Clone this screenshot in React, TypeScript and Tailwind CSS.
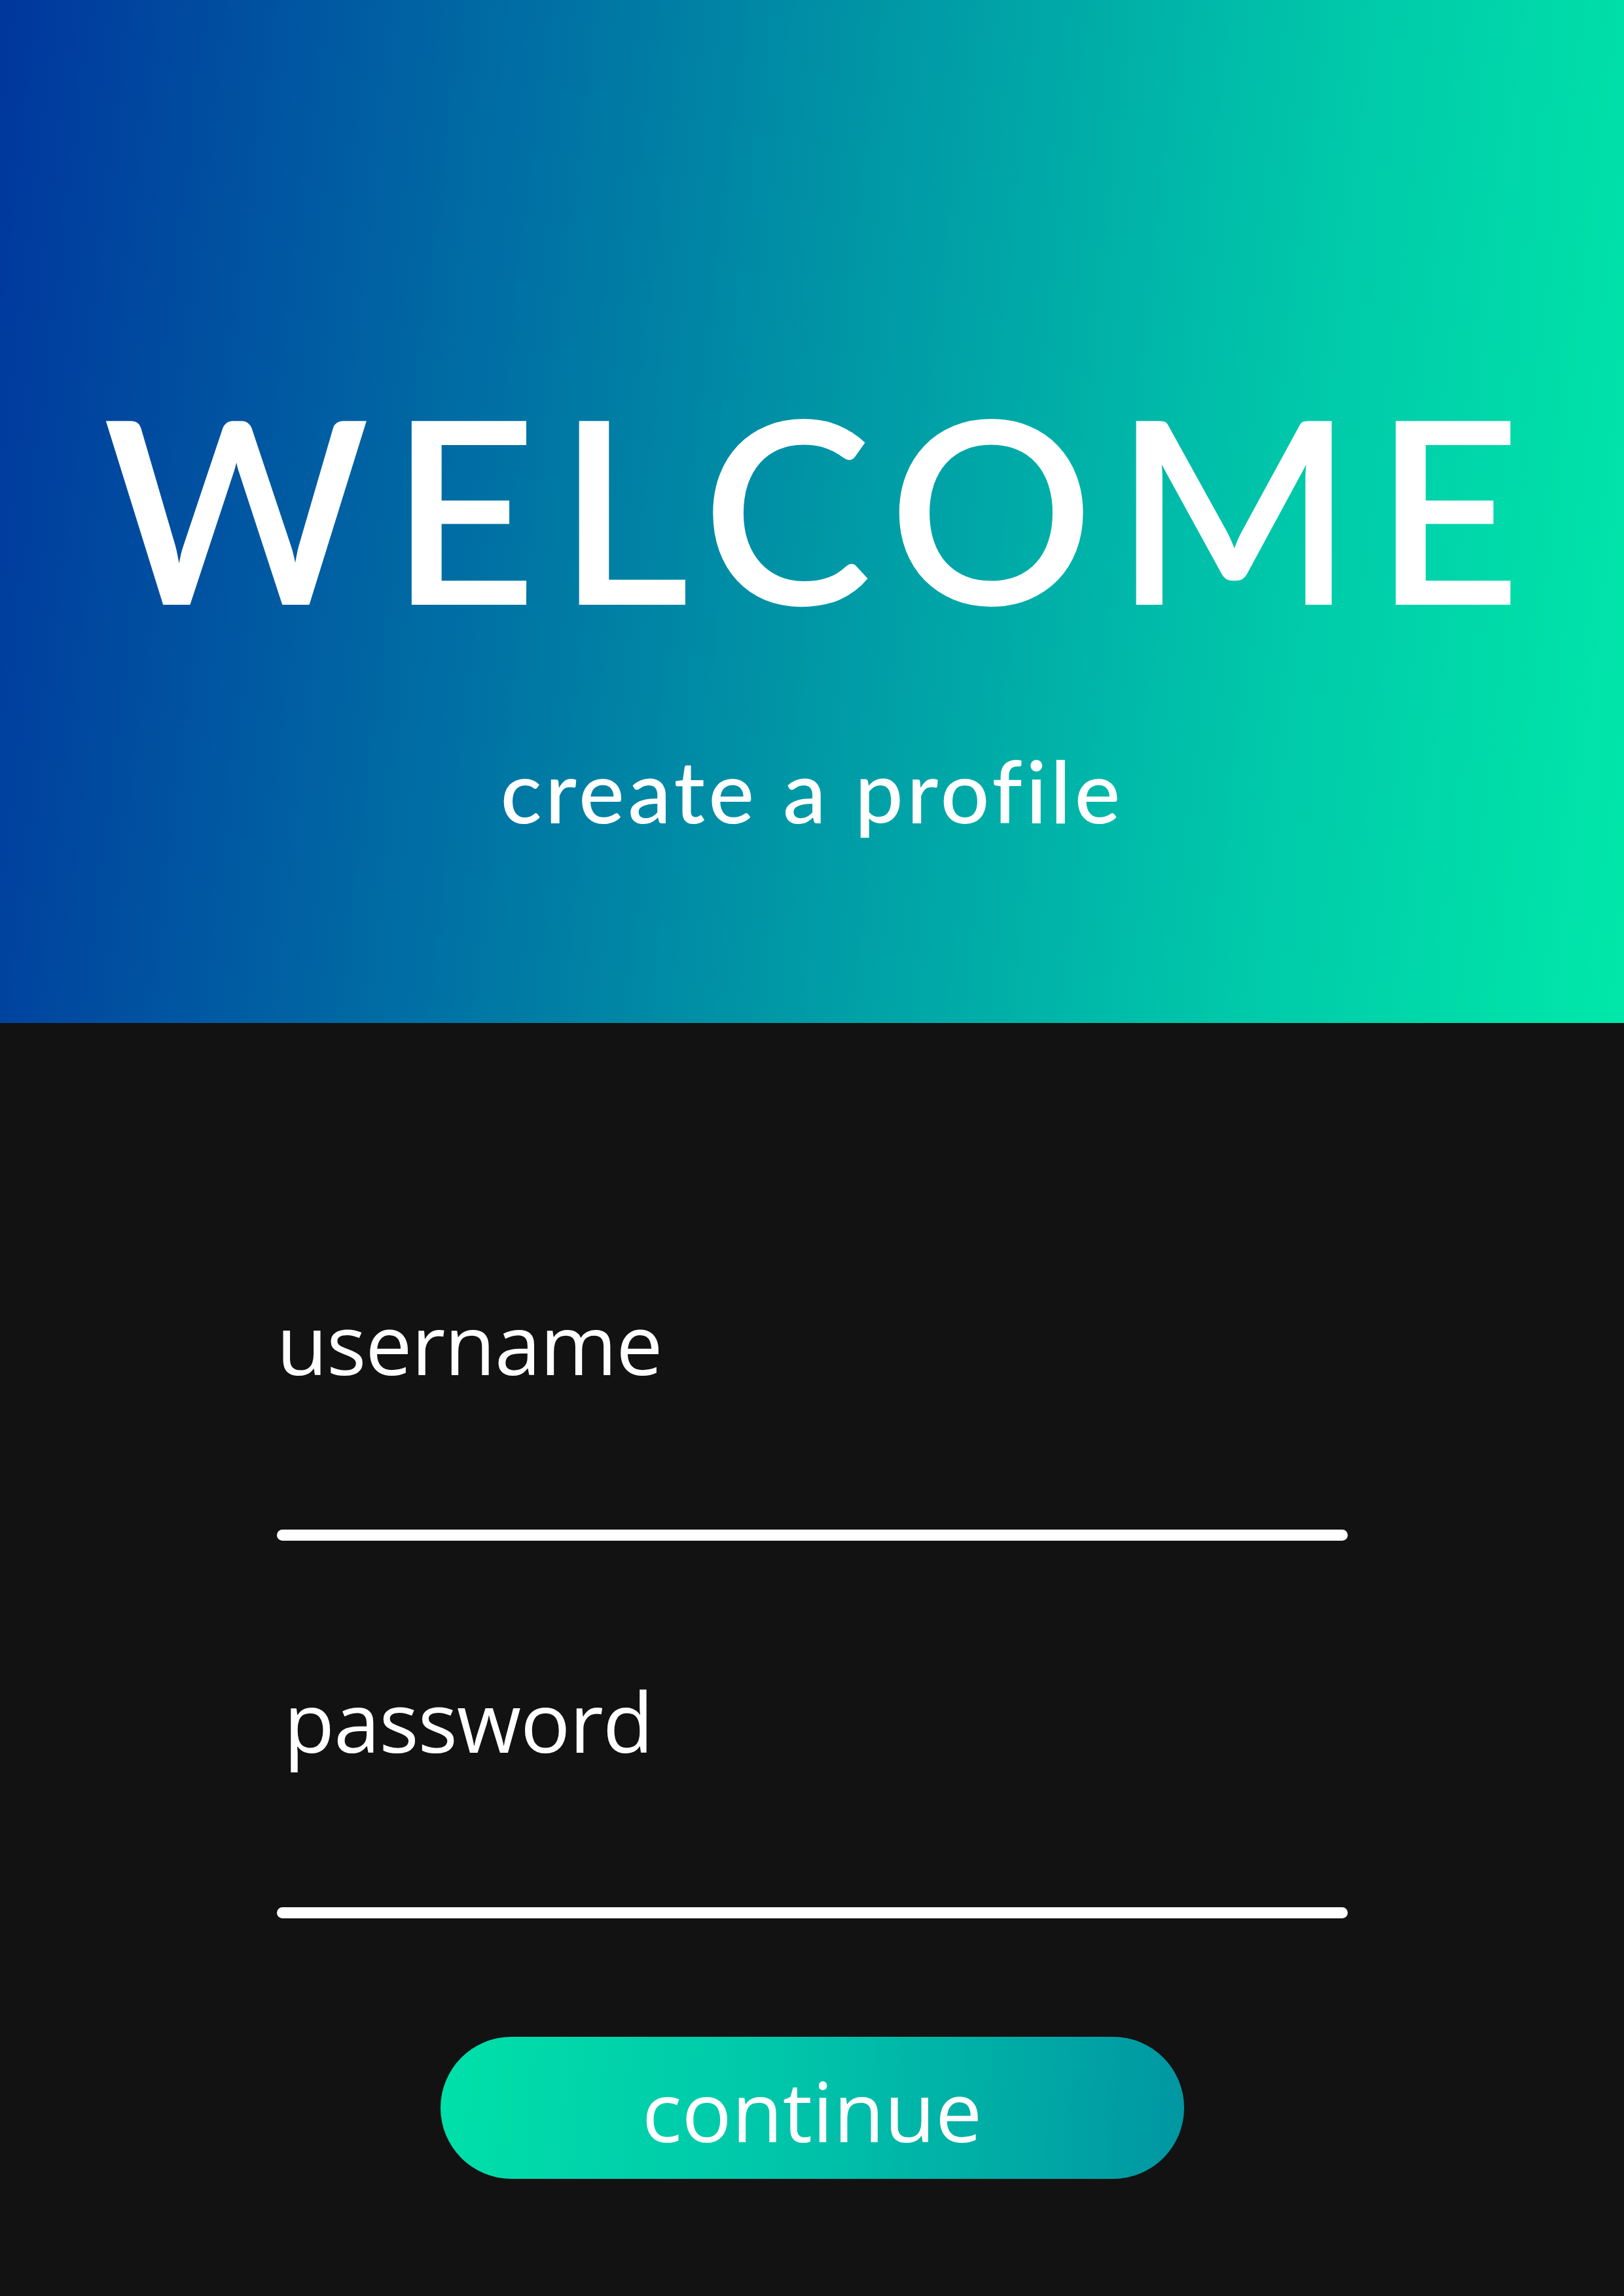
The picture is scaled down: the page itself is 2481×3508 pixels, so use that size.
export default function App() {
  return (
    <div className="min-h-[3508px] w-full bg-[#121212] font-['Open_Sans',sans-serif] text-white">
      {/* header */}
      <header className="flex h-[1563px] flex-col items-center bg-[linear-gradient(97deg,#00369d_0%,#0064a3_25%,#0099a6_52%,#00c9aa_78%,#00e8a9_100%)] pt-[578px]">
        <h1 className="font-['Lato',sans-serif] text-[390px] font-semibold leading-none tracking-[0.08em] pl-[0.08em]">
          WELCOME
        </h1>
        <p className="mt-[173px] font-['Lato',sans-serif] text-[132px] font-medium leading-none tracking-[0.04em]">
          create a profile
        </p>
      </header>

      {/* form */}
      <main className="mx-auto flex w-[1636px] flex-col pt-[425px]">
        <label className="text-[127px] leading-none tracking-[-0.01em]">username</label>
        <div className="mt-[222px] h-[17px] w-full rounded-full bg-white" />

        <label className="mt-[211px] pl-[11px] text-[127px] leading-none tracking-[-0.01em]">password</label>
        <div className="mt-[222px] h-[17px] w-full rounded-full bg-white" />

        <button className="mx-auto mt-[181px] flex h-[217px] w-[1136px] items-center justify-center rounded-full bg-[linear-gradient(95deg,#00e0aa_0%,#00c6aa_45%,#0096a2_100%)] pt-[6px] text-[127px] leading-none text-white">
          continue
        </button>
      </main>
    </div>
  );
}
